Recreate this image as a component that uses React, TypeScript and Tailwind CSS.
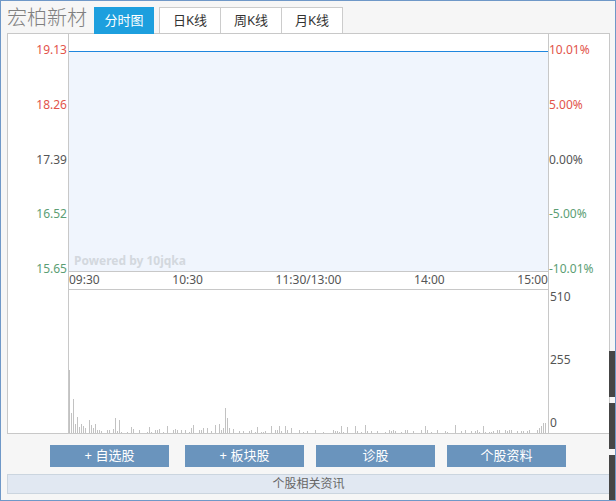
import React from 'react';

// Price axis (left) and change axis (right)
const priceLabels = [
  { v: '19.13', c: 'text-[#e2544a]' },
  { v: '18.26', c: 'text-[#e2544a]' },
  { v: '17.39', c: 'text-[#555555]' },
  { v: '16.52', c: 'text-[#5c9e74]' },
  { v: '15.65', c: 'text-[#5c9e74]' },
];

const pctLabels = [
  { v: '10.01%', c: 'text-[#e2544a]' },
  { v: '5.00%', c: 'text-[#e2544a]' },
  { v: '0.00%', c: 'text-[#555555]' },
  { v: '-5.00%', c: 'text-[#5c9e74]' },
  { v: '-10.01%', c: 'text-[#5c9e74]' },
];

const timeLabels = ['09:30', '10:30', '11:30/13:00', '14:00', '15:00'];

// Volume bars: [x on page, height]
const knownBars: [number, number][] = [
  [69, 63], [71, 20], [73, 34], [75, 9], [77, 16], [79, 6], [81, 9], [83, 7], [85, 5],
  [89, 13], [91, 8], [93, 5], [95, 9], [97, 3], [99, 3], [101, 2], [107, 3], [109, 3],
  [113, 4], [115, 15], [117, 2], [119, 13], [121, 1], [127, 1], [131, 6], [133, 4],
  [139, 3], [147, 1], [149, 6], [151, 1], [155, 3], [157, 3], [159, 4], [163, 1],
  [167, 7], [173, 3], [175, 4], [177, 3], [181, 3], [185, 3], [189, 1], [191, 5],
  [193, 8], [199, 3], [201, 3], [203, 5], [207, 5], [211, 2], [215, 8], [219, 9],
  [221, 3], [223, 5], [225, 25], [227, 15], [229, 5], [233, 4], [239, 2],
];

function buildBars() {
  const bars = [...knownBars];
  let seed = 17;
  const rnd = () => {
    seed = (seed * 1103515245 + 12345) % 2147483648;
    return seed / 2147483648;
  };
  for (let x = 243; x < 535; x += 2) {
    const r = rnd();
    if (r < 0.5) continue;
    const h = r > 0.94 ? 5 + Math.floor(rnd() * 4) : 1 + Math.floor(rnd() * 3);
    bars.push([x, h]);
  }
  bars.push([537, 3], [539, 5], [541, 7], [543, 10], [545, 10]);
  return bars;
}

const bars = buildBars();

function VolumeChart() {
  return (
    <svg width="479" height="143" viewBox="0 0 479 143" className="block">
      {bars.map(([x, h], i) => (
        <rect key={i} x={x - 69} y={143 - h} width="1" height={h} fill="#c2c2c2" />
      ))}
    </svg>
  );
}

const buttons = [
  { label: '+ 自选股', cls: 'ml-[43px]' },
  { label: '+ 板块股', cls: 'ml-[16px]' },
  { label: '诊股', cls: 'ml-[12px]' },
  { label: '个股资料', cls: 'ml-[12px]' },
];

export default function App() {
  return (
    <div
      className="relative w-[616px] h-[501px] border border-[#6f98c8] bg-[#f6f6f6] pl-[6px] overflow-hidden"
      style={{ fontFamily: '"Noto Sans", "Noto Sans CJK SC", sans-serif' }}
    >
      {/* Header with stock name + tabs */}
      <div className="flex items-start h-[32px]">
        <div className="w-[80px] mt-[4px] leading-[26px] text-[20px] font-light text-[#808080] whitespace-nowrap">
          宏柏新材
        </div>
        <div className="relative z-10 ml-[7px] mt-[6px] w-[60px] h-[27px] bg-[#1d9fde] text-white text-[13px] flex items-center justify-center">
          分时图
        </div>
        <div className="ml-[5px] mt-[6px] flex h-[26px] border-t border-r border-[#cccccc] bg-white">
          {['日K线', '周K线', '月K线'].map((t) => (
            <div
              key={t}
              className="w-[61px] border-l border-[#cccccc] flex items-center justify-center text-[13px] text-[#333333]"
            >
              {t}
            </div>
          ))}
        </div>
      </div>

      {/* Chart box */}
      <div className="w-[603px] h-[401px] border border-[#c8c8c8] bg-white flex text-[12px]">
        {/* left price axis */}
        <div className="w-[60px] pt-[9px]">
          <div className="h-[233px] flex flex-col justify-between items-end pr-[1px]">
            {priceLabels.map((l) => (
              <span key={l.v} className={`leading-[14px] ${l.c}`}>
                {l.v}
              </span>
            ))}
          </div>
        </div>

        {/* plot column */}
        <div className="w-[481px] border-l border-r border-[#c8c8c8] flex flex-col">
          <div className="h-[17px]" />
          <div className="h-px bg-[#1f86de]" />
          <div className="h-[219px] bg-[#f0f5fd] flex items-end pl-[5px] pb-[3px]">
            <span className="text-[12px] font-bold leading-[14px] text-[#d3d8de]">Powered by 10jqka</span>
          </div>
          <div className="h-px bg-[#c8c8c8]" />
          <div className="h-[17px] flex justify-between leading-[16px] text-[#555555]">
            {timeLabels.map((t) => (
              <span key={t}>{t}</span>
            ))}
          </div>
          <div className="h-px bg-[#c8c8c8]" />
          <div className="h-[143px] flex items-end">
            <VolumeChart />
          </div>
        </div>

        {/* right axis */}
        <div className="flex-1 pt-[9px]">
          <div className="h-[233px] flex flex-col justify-between items-start">
            {pctLabels.map((l) => (
              <span key={l.v} className={`leading-[14px] ${l.c}`}>
                {l.v}
              </span>
            ))}
          </div>
          <div className="mt-[14px] h-[140px] flex flex-col justify-between items-start pl-[1px] text-[#555555]">
            <span className="leading-[14px]">510</span>
            <span className="leading-[14px]">255</span>
            <span className="leading-[14px]">0</span>
          </div>
        </div>
      </div>

      {/* Action buttons */}
      <div className="flex mt-[11px]">
        {buttons.map((b) => (
          <div
            key={b.label}
            className={`${b.cls} w-[119px] h-[22px] bg-[#6a94bd] text-white text-[13px] flex items-center justify-center`}
          >
            {b.label}
          </div>
        ))}
      </div>

      {/* Related news bar */}
      <div className="mt-[7px] w-[603px] h-[20px] bg-[#e1e8f2] border border-[#cbd5df] flex items-center justify-center text-[12px] text-[#666666]">
        个股相关资讯
      </div>

      {/* dark side handles */}
      <div className="absolute right-0 top-[350px] w-[6px] h-[46px] bg-[#454545]" />
      <div className="absolute right-0 top-[402px] w-[6px] h-[46px] bg-[#454545]" />
      <div className="absolute right-0 top-[454px] w-[6px] h-[46px] bg-[#454545]" />
    </div>
  );
}
